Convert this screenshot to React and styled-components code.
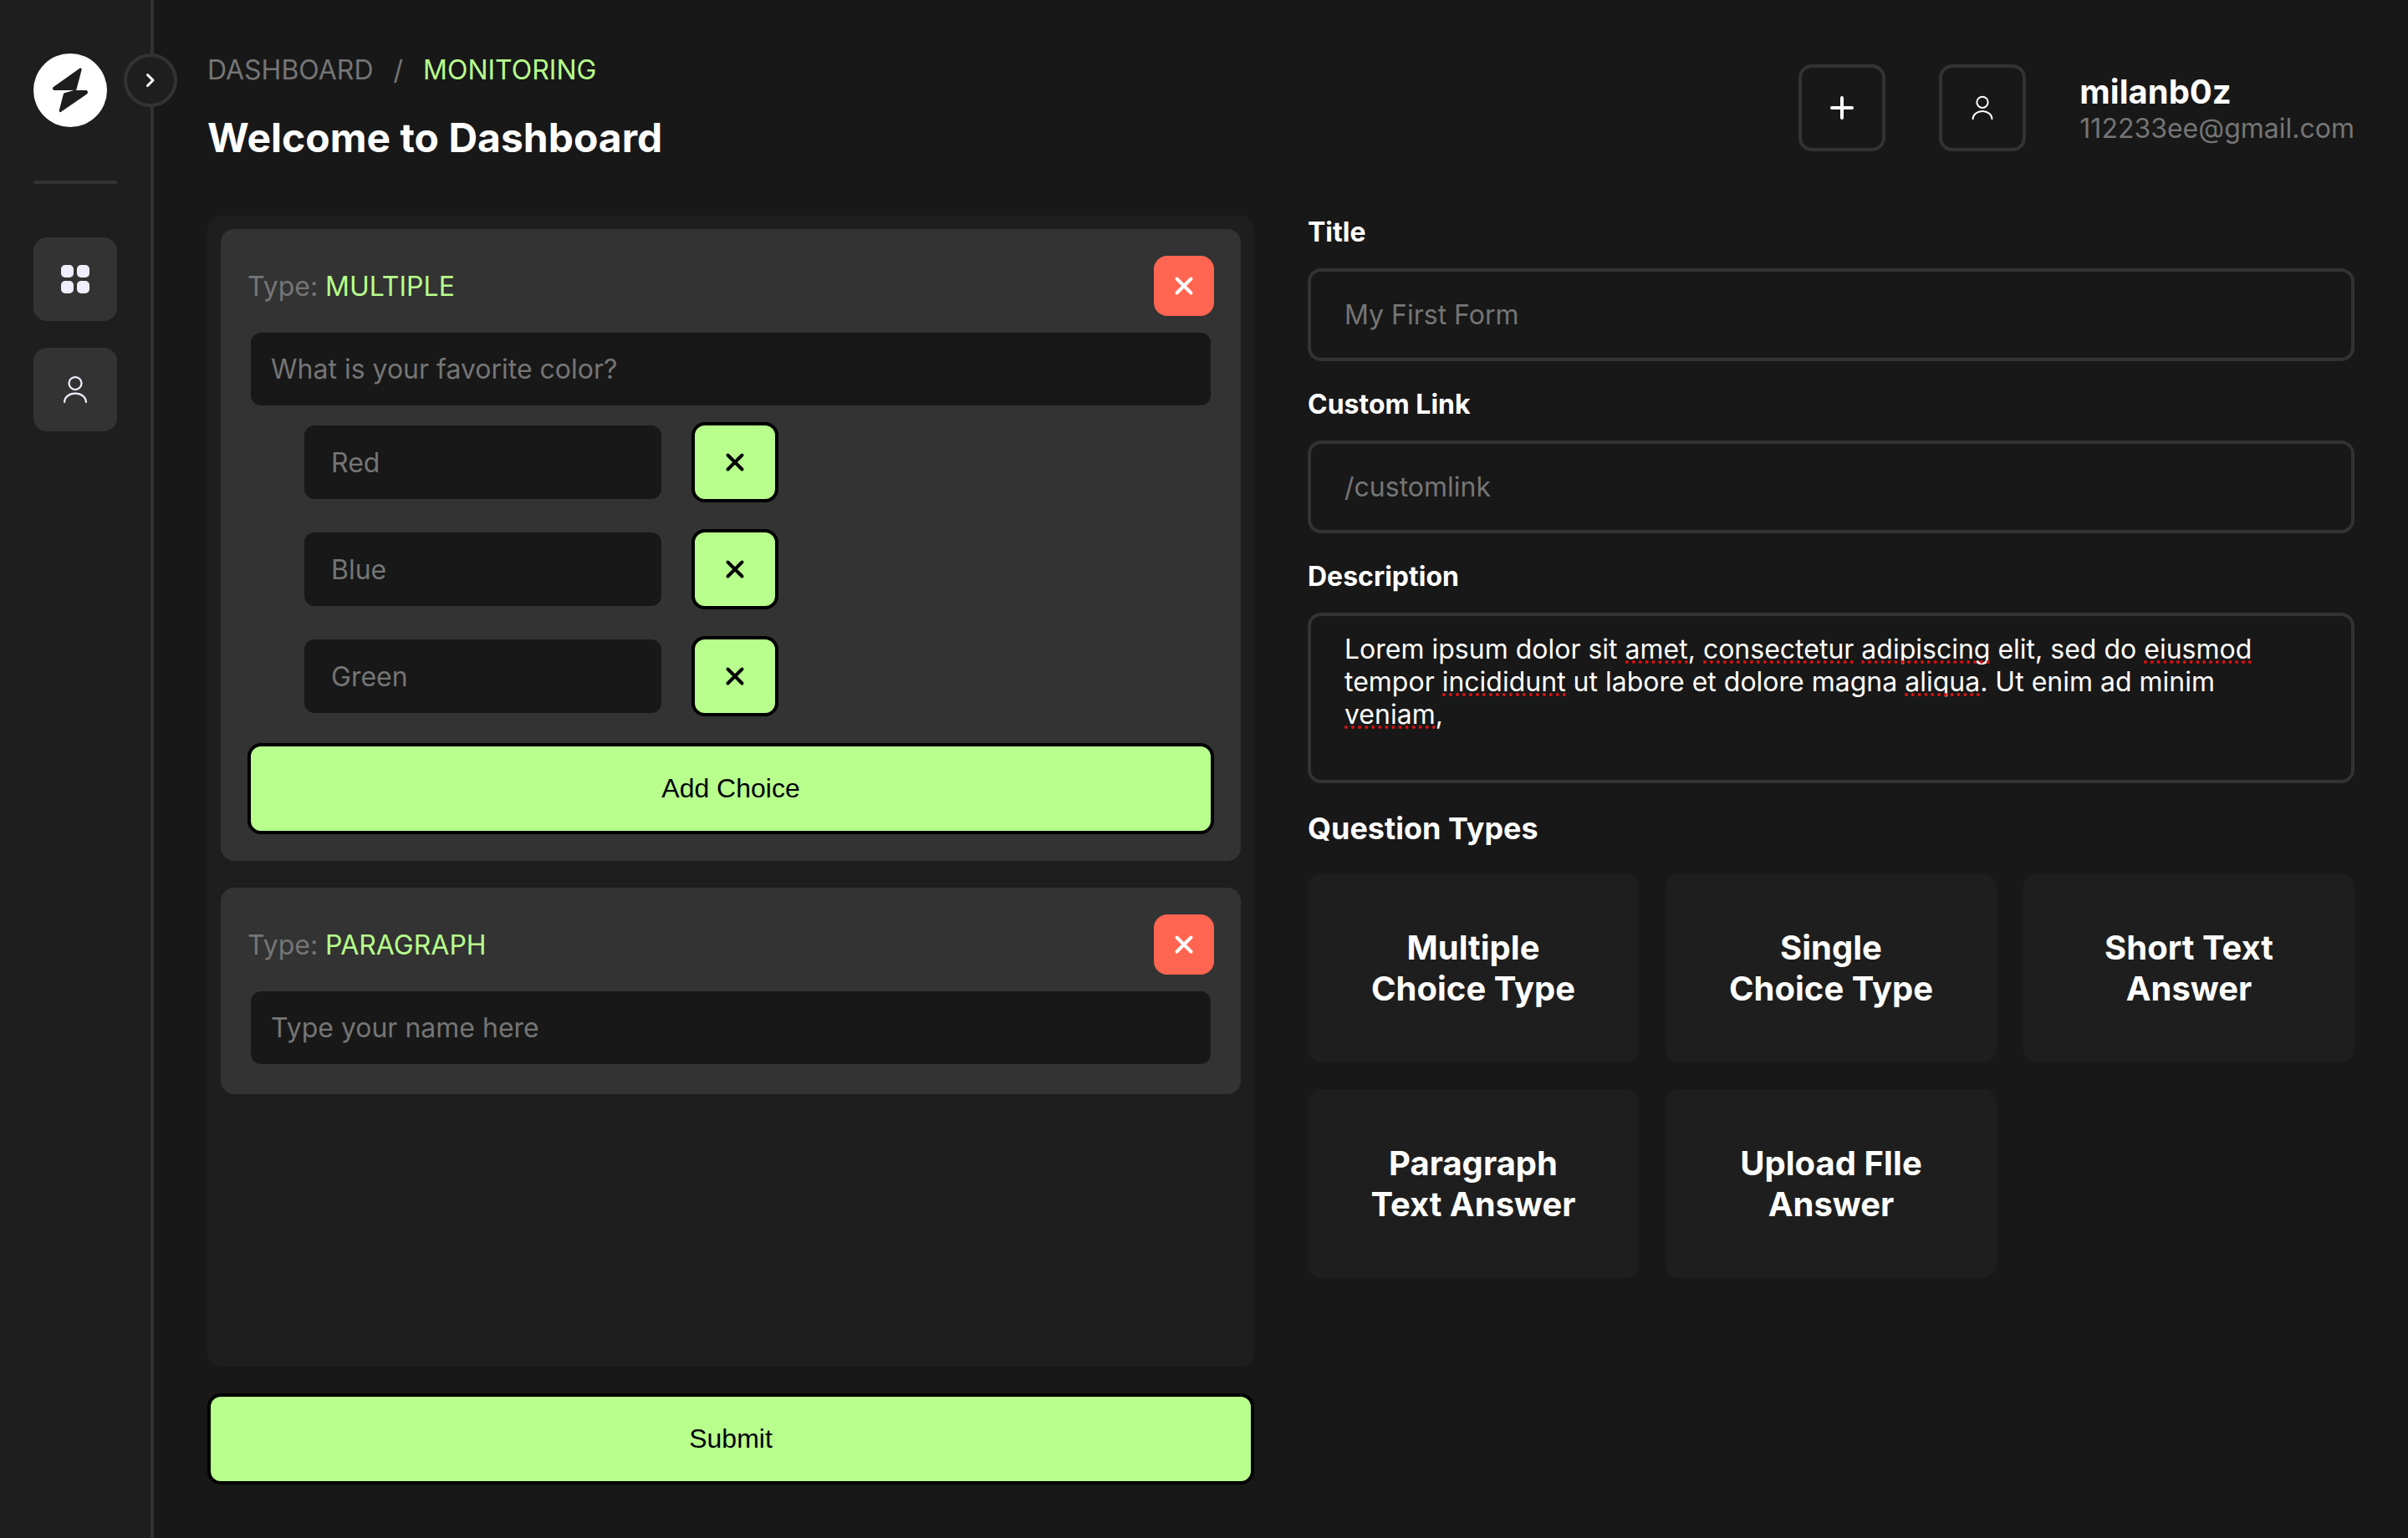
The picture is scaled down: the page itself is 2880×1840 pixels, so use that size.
import React from "react";
import styled, { createGlobalStyle } from "styled-components";

const color = {
  page: "#181818",
  panel: "#1e1e1e",
  raised: "#333333",
  accent: "#b8ff8d",
  danger: "#ff6550",
  text: "#ffffff",
  muted: "#757575",
  icon: "#eeeeff",
};

const sans = '"Inter", "Liberation Sans", sans-serif';

const GlobalStyle = createGlobalStyle`
  *, *::before, *::after { box-sizing: border-box; }
  body {
    margin: 0;
    background: ${color.page};
    color: ${color.text};
    font: 400 32px/39px ${sans};
  }
  h1, h2, p { margin: 0; }
  button { cursor: pointer; }
`;

const Page = styled.div`
  display: flex;
  min-height: 100vh;
`;

const Sidebar = styled.aside`
  position: relative;
  flex: none;
  width: 184px;
  padding: 64px 40px;
  display: flex;
  flex-direction: column;
  gap: 64px;
  background: ${color.panel};
  border-right: 4px solid ${color.raised};
`;

const LogoLink = styled.a`
  width: 88px;
  height: 88px;
  svg { display: block; }
`;

const SidebarToggle = styled.button`
  position: absolute;
  top: 64px;
  right: -32px;
  width: 64px;
  height: 64px;
  padding: 0;
  display: grid;
  place-items: center;
  color: ${color.text};
  background: ${color.panel};
  border: 4px solid ${color.raised};
  border-radius: 50%;
`;

const Divider = styled.hr`
  width: 100%;
  height: 4px;
  margin: 0;
  border: 0;
  border-radius: 2px;
  background: ${color.raised};
`;

const Nav = styled.nav`
  display: flex;
  flex-direction: column;
  gap: 32px;
`;

const NavLink = styled.a`
  height: 100px;
  display: grid;
  place-items: center;
  color: ${color.icon};
  background: ${color.raised};
  border-radius: 16px;
`;

const Main = styled.main`
  flex: 1;
  min-width: 0;
  padding: 64px;
  display: flex;
  flex-direction: column;
  gap: 64px;
`;

const Header = styled.header`
  display: flex;
  align-items: center;
  justify-content: space-between;
`;

const Heading = styled.div`
  display: flex;
  flex-direction: column;
  gap: 32px;
`;

const Breadcrumb = styled.nav`
  display: flex;
  gap: 24px;
  color: ${color.muted};
`;

const Crumb = styled.a`
  color: ${(p) => (p.$current ? color.accent : "inherit")};
  text-decoration: none;
`;

const PageTitle = styled.h1`
  font-size: 48px;
  line-height: 59px;
  font-weight: 700;
`;

const Account = styled.div`
  display: flex;
  align-items: center;
  gap: 64px;
`;

const SquareButton = styled.button`
  width: 104px;
  height: 104px;
  padding: 0;
  display: grid;
  place-items: center;
  color: ${color.text};
  background: transparent;
  border: 4px solid ${color.raised};
  border-radius: 16px;
`;

const UserName = styled.p`
  font-size: 40px;
  line-height: 49px;
  font-weight: 700;
`;

const UserEmail = styled.p`
  color: ${color.muted};
`;

const Columns = styled.div`
  flex: 1;
  display: grid;
  grid-template-columns: repeat(2, minmax(0, 1fr));
  gap: 64px;
`;

const Builder = styled.form`
  display: flex;
  flex-direction: column;
  gap: 32px;
`;

const QuestionList = styled.div`
  flex: 1;
  padding: 16px;
  display: flex;
  flex-direction: column;
  gap: 32px;
  background: ${color.panel};
  border-radius: 16px;
`;

const QuestionCard = styled.section`
  padding: 32px;
  display: flex;
  flex-direction: column;
  gap: 16px;
  background: ${color.raised};
  border-radius: 16px;
`;

const CardHeader = styled.div`
  display: flex;
  align-items: center;
  justify-content: space-between;
`;

const TypeText = styled.p`
  color: ${color.muted};
`;

const TypeName = styled.span`
  color: ${color.accent};
`;

const RemoveQuestion = styled.button`
  width: 72px;
  height: 72px;
  padding: 0;
  display: grid;
  place-items: center;
  color: ${color.text};
  background: ${color.danger};
  border: 0;
  border-radius: 16px;
`;

const TextInput = styled.input`
  display: block;
  width: 100%;
  padding: ${(p) => p.$padding};
  color: ${color.text};
  background: ${color.page};
  border: 4px solid ${color.raised};
  border-radius: 16px;
  font: 400 32px/39px ${sans};
  outline: none;
  &::placeholder { color: ${color.muted}; opacity: 1; }
`;

const Choices = styled.div`
  padding: 0 64px 16px;
  display: flex;
  flex-direction: column;
  gap: 32px;
`;

const ChoiceRow = styled.div`
  display: flex;
  gap: 32px;
  ${TextInput} { width: 435px; }
`;

const AccentButton = styled.button`
  padding: 32px;
  color: #000000;
  background: ${color.accent};
  border: 4px solid #000000;
  border-radius: 16px;
  font: 400 32px/37px "Liberation Sans", Arial, sans-serif;
`;

const RemoveChoice = styled(AccentButton)`
  width: 104px;
  height: 96px;
  padding: 0;
  display: grid;
  place-items: center;
`;

const Settings = styled.div`
  display: flex;
  flex-direction: column;
  gap: 32px;
`;

const Field = styled.div`
  display: flex;
  flex-direction: column;
  gap: 24px;
`;

const Label = styled.label`
  font-weight: 700;
`;

const TextAreaFrame = styled.div`
  position: relative;
`;

const TextArea = styled.textarea`
  display: block;
  width: 100%;
  padding: 20px 40px;
  color: ${color.text};
  background: transparent;
  border: 4px solid ${color.raised};
  border-radius: 16px;
  font: 400 32px/39px ${sans};
  resize: none;
  outline: none;
`;

const SpellingMark = styled.span`
  position: absolute;
  height: 0;
  border-bottom: 4px dotted #dd1111;
  pointer-events: none;
`;

const SectionTitle = styled.h2`
  font-size: 36px;
  line-height: 44px;
  font-weight: 700;
`;

const TypeGrid = styled.div`
  display: grid;
  grid-template-columns: repeat(3, minmax(0, 1fr));
  gap: 32px;
`;

const TypeButton = styled.button`
  padding: 64px;
  color: ${color.text};
  background: ${color.panel};
  border: 0;
  border-radius: 16px;
  font: 700 40px/49px ${sans};
`;

const LogoMark = () => (
  <svg width="88" height="88" viewBox="0 0 88 88" aria-hidden="true">
    <circle cx="44" cy="44" r="44" fill="#fff" />
    <g fill={color.panel} stroke={color.panel} strokeWidth="3" strokeLinejoin="round">
      <path d="M56.2 19 24.8 41.2q-1 1.3.8 1.3H50Z" />
      <path d="M37.4 48.6 48 45.6 63.2 45.6q.8.6-.4 1.8L32.2 68.6Z" />
    </g>
  </svg>
);

const ChevronIcon = () => (
  <svg width="24" height="24" viewBox="0 0 24 24" fill="none" stroke="currentColor" strokeWidth="3" strokeLinecap="round" strokeLinejoin="round" aria-hidden="true">
    <path d="m8.5 5.5 6.5 6.5-6.5 6.5" />
  </svg>
);

const GridIcon = () => (
  <svg width="34" height="34" viewBox="0 0 34 34" fill="currentColor" aria-hidden="true">
    <rect width="15" height="15" rx="5" />
    <rect x="19" width="15" height="15" rx="5" />
    <rect y="19" width="15" height="15" rx="5" />
    <rect x="19" y="19" width="15" height="15" rx="5" />
  </svg>
);

const UserIcon = ({ size }) => (
  <svg width={size} height={size} viewBox="0 0 24 24" fill="none" stroke="currentColor" strokeWidth="1.5" strokeLinecap="round" strokeLinejoin="round" aria-hidden="true">
    <circle cx="12" cy="7" r="5" />
    <path d="M20.59 22c0-3.87-3.85-7-8.59-7s-8.59 3.13-8.59 7" />
  </svg>
);

const PlusIcon = () => (
  <svg width="32" height="32" viewBox="0 0 32 32" fill="none" stroke="currentColor" strokeWidth="4" strokeLinecap="round" aria-hidden="true">
    <path d="M16 4v24M4 16h24" />
  </svg>
);

const CrossIcon = () => (
  <svg width="32" height="32" viewBox="0 0 32 32" fill="none" stroke="currentColor" strokeWidth="4" strokeLinecap="round" aria-hidden="true">
    <path d="m7.5 7.5 17 17M24.5 7.5l-17 17" />
  </svg>
);

const questions = [
  {
    type: "MULTIPLE",
    placeholder: "What is your favorite color?",
    choices: ["Red", "Blue", "Green"],
  },
  { type: "PARAGRAPH", placeholder: "Type your name here" },
];

const settingsFields = [
  { id: "form-title", label: "Title", placeholder: "My First Form" },
  { id: "form-link", label: "Custom Link", placeholder: "/customlink" },
];

const questionTypes = [
  "Multiple Choice Type",
  "Single Choice Type",
  "Short Text Answer",
  "Paragraph Text Answer",
  "Upload FIle Answer",
];

const description =
  "Lorem ipsum dolor sit amet, consectetur adipiscing elit, sed do eiusmod tempor incididunt ut labore et dolore magna aliqua. Ut enim ad minim veniam,";

const unknownWords = /amet|consectetur|adipiscing|eiusmod|incididunt|aliqua|veniam/g;

// Finds where each unknown word sits inside the text area by laying the same
// text out in a hidden copy of its box, which is removed once it is measured.
function measureUnknownWords(textarea, text) {
  const style = getComputedStyle(textarea);
  const probe = document.createElement("div");
  for (const name of ["padding", "border", "font", "width"]) {
    probe.style[name] = style[name];
  }
  probe.style.position = "absolute";
  probe.style.top = "0";
  probe.style.left = "0";
  probe.style.visibility = "hidden";
  probe.style.whiteSpace = "pre-wrap";
  probe.textContent = text;
  textarea.parentNode.appendChild(probe);

  const origin = probe.getBoundingClientRect();
  const marks = [...text.matchAll(unknownWords)].map((match) => {
    const range = document.createRange();
    range.setStart(probe.firstChild, match.index);
    range.setEnd(probe.firstChild, match.index + match[0].length);
    const rect = range.getBoundingClientRect();
    return {
      left: Math.round(rect.left - origin.left),
      top: Math.round(rect.bottom - origin.top) - 6,
      width: Math.round(rect.width),
    };
  });
  probe.remove();
  return marks;
}

function Question({ type, placeholder, choices }) {
  return (
    <QuestionCard>
      <CardHeader>
        <TypeText>
          Type: <TypeName>{type}</TypeName>
        </TypeText>
        <RemoveQuestion type="button" aria-label="Remove question">
          <CrossIcon />
        </RemoveQuestion>
      </CardHeader>
      <TextInput $padding="24px" placeholder={placeholder} aria-label="Question" />
      {choices && (
        <>
          <Choices>
            {choices.map((choice) => (
              <ChoiceRow key={choice}>
                <TextInput $padding="24px 32px" placeholder={choice} aria-label="Choice" />
                <RemoveChoice type="button" aria-label="Remove choice">
                  <CrossIcon />
                </RemoveChoice>
              </ChoiceRow>
            ))}
          </Choices>
          <AccentButton type="button">Add Choice</AccentButton>
        </>
      )}
    </QuestionCard>
  );
}

function DescriptionField() {
  const [text, setText] = React.useState(description);
  const [marks, setMarks] = React.useState([]);
  const areaRef = React.useRef(null);

  React.useLayoutEffect(() => {
    const update = () => setMarks(measureUnknownWords(areaRef.current, text));
    update();
    const observer = new ResizeObserver(update);
    observer.observe(areaRef.current);
    return () => observer.disconnect();
  }, [text]);

  return (
    <Field>
      <Label htmlFor="form-description">Description</Label>
      <TextAreaFrame>
        <TextArea
          id="form-description"
          ref={areaRef}
          rows={4}
          spellCheck={false}
          value={text}
          onChange={(e) => setText(e.target.value)}
        />
        {marks.map((mark, i) => (
          <SpellingMark key={i} style={mark} aria-hidden="true" />
        ))}
      </TextAreaFrame>
    </Field>
  );
}

export default function App() {
  return (
    <Page>
      <GlobalStyle />
      <Sidebar>
        <LogoLink href="#" aria-label="Home">
          <LogoMark />
        </LogoLink>
        <Divider />
        <Nav aria-label="Main">
          <NavLink href="#dashboard" aria-label="Dashboard">
            <GridIcon />
          </NavLink>
          <NavLink href="#profile" aria-label="Profile">
            <UserIcon size={36} />
          </NavLink>
        </Nav>
        <SidebarToggle type="button" aria-label="Expand sidebar">
          <ChevronIcon />
        </SidebarToggle>
      </Sidebar>
      <Main>
        <Header>
          <Heading>
            <Breadcrumb aria-label="Breadcrumb">
              <Crumb href="#dashboard">DASHBOARD</Crumb>
              <span>/</span>
              <Crumb href="#monitoring" $current>
                MONITORING
              </Crumb>
            </Breadcrumb>
            <PageTitle>Welcome to Dashboard</PageTitle>
          </Heading>
          <Account>
            <SquareButton type="button" aria-label="Create form">
              <PlusIcon />
            </SquareButton>
            <SquareButton type="button" aria-label="Account">
              <UserIcon size={32} />
            </SquareButton>
            <div>
              <UserName>milanb0z</UserName>
              <UserEmail>112233ee@gmail.com</UserEmail>
            </div>
          </Account>
        </Header>
        <Columns>
          <Builder>
            <QuestionList>
              {questions.map((question) => (
                <Question key={question.type} {...question} />
              ))}
            </QuestionList>
            <AccentButton type="submit">Submit</AccentButton>
          </Builder>
          <Settings>
            {settingsFields.map(({ id, label, placeholder }) => (
              <Field key={id}>
                <Label htmlFor={id}>{label}</Label>
                <TextInput id={id} $padding="32px 40px" placeholder={placeholder} />
              </Field>
            ))}
            <DescriptionField />
            <SectionTitle>Question Types</SectionTitle>
            <TypeGrid>
              {questionTypes.map((type) => (
                <TypeButton key={type} type="button">
                  {type}
                </TypeButton>
              ))}
            </TypeGrid>
          </Settings>
        </Columns>
      </Main>
    </Page>
  );
}
